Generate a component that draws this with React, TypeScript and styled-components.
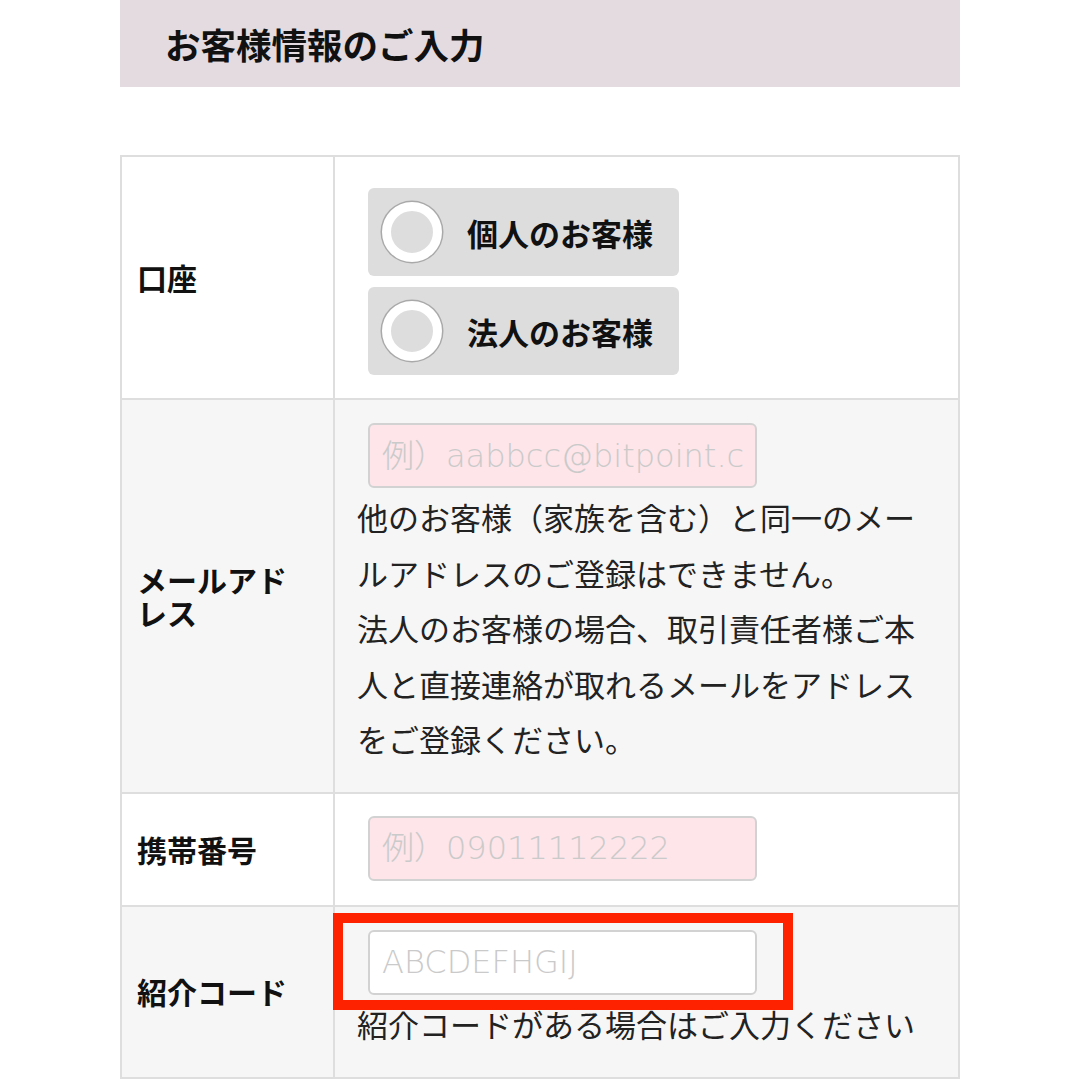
import React from "react";
import styled, { createGlobalStyle } from "styled-components";

const GlobalStyle = createGlobalStyle`
  * {
    box-sizing: border-box;
  }
  body {
    margin: 0;
    background: #fff;
    font-family: "Noto Sans CJK JP", "Noto Sans", sans-serif;
    color: #222;
  }
`;

const Page = styled.div`
  width: 840px;
  margin: 0 auto;
`;

const Heading = styled.h2`
  margin: 0;
  height: 87px;
  display: flex;
  align-items: center;
  padding-left: 45px;
  background: #e3dbdf;
  font-size: 35.5px;
  font-weight: 700;
  color: #111;
`;

const Table = styled.div`
  margin-top: 68px;
  border: 2px solid #dedede;
  border-bottom: none;
`;

const Row = styled.div<{ $shade?: boolean }>`
  display: grid;
  grid-template-columns: 213px 1fr;
  background: ${(p) => (p.$shade ? "#f6f6f6" : "#fff")};
  border-bottom: 2px solid #dedede;
`;

const Label = styled.div`
  display: flex;
  align-items: center;
  padding: 0 28px 0 15px;
  border-right: 2px solid #dedede;
  font-size: 30px;
  font-weight: 700;
  line-height: 33px;
  color: #111;
`;

const Cell = styled.div<{ $pad: string }>`
  position: relative;
  padding: ${(p) => p.$pad};
  padding-left: 22px;
  padding-right: 30px;
`;

const RadioGroup = styled.div`
  display: flex;
  flex-direction: column;
  gap: 11px;
  margin-left: 11px;
`;

const RadioBox = styled.label`
  width: 311px;
  height: 88px;
  display: flex;
  align-items: center;
  gap: 25px;
  padding-left: 14px;
  background: #dddddd;
  border-radius: 6px;
  font-size: 31px;
  font-weight: 700;
  color: #111;
  cursor: pointer;
`;

const Circle = styled.span`
  width: 60px;
  height: 60px;
  border-radius: 50%;
  background: #dddddd;
  border: 9px solid #fff;
  box-shadow: 0 0 0 1.5px #a9a9a9;
`;

const Field = styled.input<{ $pink?: boolean }>`
  display: block;
  width: 389px;
  height: 65px;
  margin-left: 11px;
  padding: 0 12px;
  border: 2px solid #d2d2d2;
  border-radius: 6px;
  background: ${(p) => (p.$pink ? "#fde5e9" : "#fff")};
  font-family: "DejaVu Sans", "Noto Sans CJK JP", sans-serif;
  font-size: 32px;
  font-weight: 200;
  outline: none;
  &::placeholder {
    color: #cacaca;
  }
`;

const Note = styled.p`
  margin: 1px 0 0;
  font-size: 31px;
  line-height: 55.5px;
  color: #222;
`;

const Highlight = styled.div`
  position: absolute;
  top: 6px;
  left: -2px;
  width: 460px;
  height: 97px;
  border: 10px solid #ff2200;
  pointer-events: none;
`;

const options = ["個人のお客様", "法人のお客様"];

export default function App() {
  return (
    <Page>
      <GlobalStyle />
      <Heading>お客様情報のご入力</Heading>
      <Table>
        <Row>
          <Label>口座</Label>
          <Cell $pad="31px 0 23px">
            <RadioGroup>
              {options.map((o) => (
                <RadioBox key={o}>
                  <Circle />
                  {o}
                </RadioBox>
              ))}
            </RadioGroup>
          </Cell>
        </Row>
        <Row $shade>
          <Label>メールアドレス</Label>
          <Cell $pad="23px 0 25px">
            <Field $pink placeholder="例）aabbcc@bitpoint.co.jp" />
            <Note>
              他のお客様（家族を含む）と同一のメールアドレスのご登録はできません。
              <br />
              法人のお客様の場合、取引責任者様ご本人と直接連絡が取れるメールをアドレスをご登録ください。
            </Note>
          </Cell>
        </Row>
        <Row>
          <Label>携帯番号</Label>
          <Cell $pad="22px 0 24px">
            <Field $pink placeholder="例）09011112222" />
          </Cell>
        </Row>
        <Row $shade>
          <Label>紹介コード</Label>
          <Cell $pad="23px 0 26px">
            <Field placeholder="ABCDEFHGIJ" />
            <Note>紹介コードがある場合はご入力ください</Note>
            <Highlight />
          </Cell>
        </Row>
      </Table>
    </Page>
  );
}
